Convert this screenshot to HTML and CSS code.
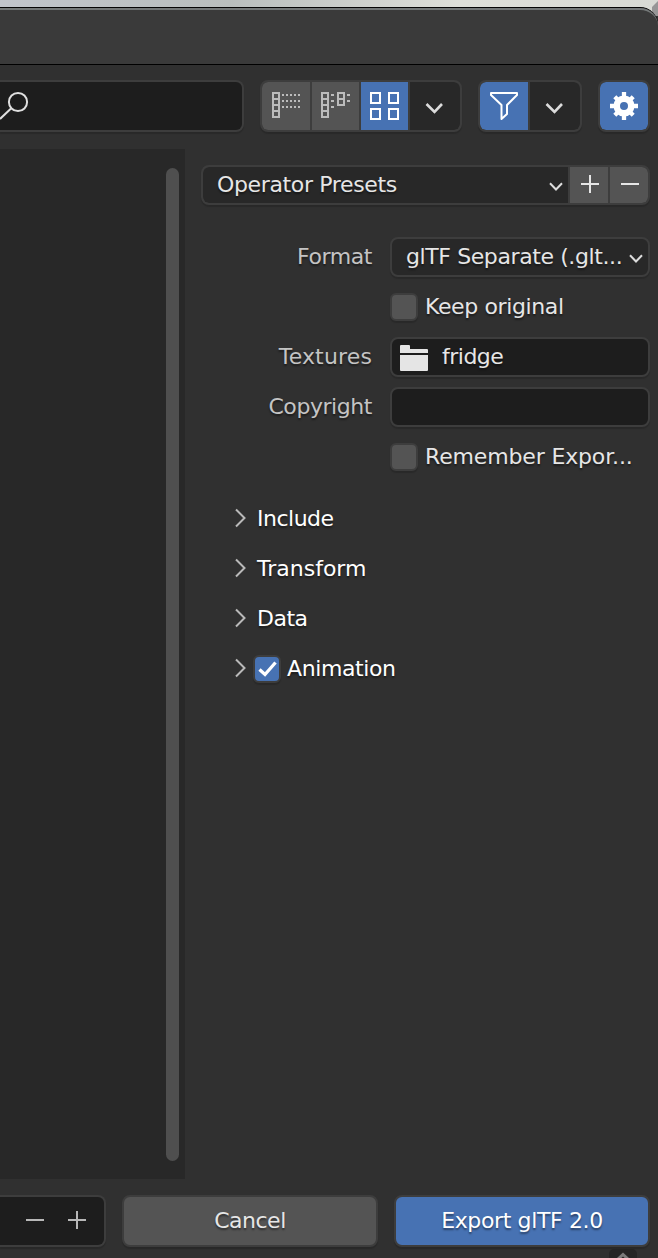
FILE: index.html
```
<!DOCTYPE html>
<html lang="en">
<head>
<meta charset="utf-8">
<title>Export glTF 2.0</title>
<link rel="stylesheet" href="styles.css">
</head>
<body>
<div class="desktop"><span class="corner"></span></div>
<div class="window">
  <header class="titlebar"></header>
  <div class="toolbar">
    <div class="box search">
      <svg width="30" height="48" viewBox="0 0 30 48"><path d="M0 37L11 26.5" stroke="#e0e0e0" stroke-width="2" fill="none"/><circle cx="18" cy="20" r="9.1" fill="none" stroke="#e0e0e0" stroke-width="2"/></svg>
    </div>
    <div class="box group view">
      <div class="cell raised"><svg width="48" height="48" viewBox="0 0 48 48" fill="none" stroke="#bcbcbc" stroke-width="2"><path d="M11 11h6v24h-6zM11 17h6M11 23h6M11 29h6"/><path d="M20 13h19M20 19h19M20 25h19" stroke-dasharray="2 2"/></svg></div>
      <div class="cell raised"><svg width="47" height="48" viewBox="0 0 47 48" fill="none" stroke="#bcbcbc" stroke-width="2"><path d="M10 11h6v24h-6zM10 17h6M10 23h6M10 29h6M26 11h6v12h-6zM26 17h6"/><path d="M19 13h3M19 19h3M19 25h3M35 13h3M35 19h3"/></svg></div>
      <div class="cell active"><svg width="47" height="48" viewBox="0 0 47 48" fill="none" stroke="#fff" stroke-width="2"><path d="M10 11h9v10h-9zM28 11h9v10h-9zM10 27h9v10h-9zM28 27h9v10h-9z"/></svg></div>
      <div class="cell menu"><svg width="50" height="48" viewBox="0 0 50 48"><path d="M16.5 22L24.5 30L32 22" fill="none" stroke="#dcdcdc" stroke-width="2.6"/></svg></div>
    </div>
    <div class="box group filter">
      <div class="cell active"><svg width="48" height="48" viewBox="0 0 48 48"><path d="M11 11H37V13L27 23V32L21.500 37V23L11 13Z" fill="none" stroke="#fff" stroke-width="2" stroke-linejoin="round"/></svg></div>
      <div class="cell menu"><svg width="50" height="48" viewBox="0 0 50 48"><path d="M16.500 22L24.500 30L32 22" fill="none" stroke="#dcdcdc" stroke-width="2.6"/></svg></div>
    </div>
    <div class="box group gear">
      <div class="cell active"><svg width="48" height="48" viewBox="0 0 48 48"><circle cx="24" cy="24" r="7.250" fill="none" stroke="#fff" stroke-width="6.500"/><path d="M24 10v5M24 33v5M10 24h5M33 24h5M14.800 14.800l3.200 3.200M30 30l3.200 3.200M14.800 33.200l3.200-3.200M30 18l3.200-3.200" stroke="#fff" stroke-width="4.300"/></svg></div>
    </div>
  </div>
  <main class="content">
    <section class="files"><div class="scrollbar"></div></section>
    <aside class="options">
      <div class="box group presets">
        <div class="cell menu presets-name"><span class="t-presets">Operator Presets</span>
          <svg width="14" height="10" viewBox="0 0 14 10"><path d="M1 1.200L7 7.500L13 1.200" fill="none" stroke="#dcdcdc" stroke-width="2"/></svg></div>
        <div class="cell raised"><svg width="38" height="36" viewBox="0 0 38 36"><path d="M11 17h18M20 8v18" stroke="#e6e6e6" stroke-width="2"/></svg></div>
        <div class="cell raised"><svg width="38" height="36" viewBox="0 0 38 36"><path d="M11 17h18" stroke="#e6e6e6" stroke-width="2"/></svg></div>
      </div>
      <div class="form">
        <label class="label t-format">Format</label>
        <div class="box field dropdown"><span class="t-separate">glTF Separate (.glt...</span>
          <svg width="14" height="10" viewBox="0 0 14 10"><path d="M1 1.200L7 7.500L13 1.200" fill="none" stroke="#dcdcdc" stroke-width="2"/></svg></div>
        <div class="check"><span class="box tick"></span><span class="t-keep">Keep original</span></div>
        <label class="label t-textures">Textures</label>
        <div class="box field input">
          <svg width="28" height="26" viewBox="0 0 28 26" fill="#e5e5e5"><path d="M0 1q0-1 1-1h8q1 0 1 1v3h17q1 0 1 1v3H0zM0 10h28v15q0 1-1 1H1q-1 0-1-1z"/></svg><span class="t-fridge">fridge</span></div>
        <label class="label t-copyright">Copyright</label>
        <div class="box field input"></div>
        <div class="check"><span class="box tick"></span><span class="t-remember">Remember Expor...</span></div>
      </div>
      <div class="panels">
        <div class="panel"><svg class="arrow" width="12" height="20" viewBox="0 0 12 20"><path d="M1 1.500L9.500 10L1 18.500"/></svg><span class="t-include">Include</span></div>
        <div class="panel"><svg class="arrow" width="12" height="20" viewBox="0 0 12 20"><path d="M1 1.500L9.500 10L1 18.500"/></svg><span class="t-transform">Transform</span></div>
        <div class="panel"><svg class="arrow" width="12" height="20" viewBox="0 0 12 20"><path d="M1 1.500L9.500 10L1 18.500"/></svg><span class="t-data">Data</span></div>
        <div class="panel"><svg class="arrow" width="12" height="20" viewBox="0 0 12 20"><path d="M1 1.500L9.500 10L1 18.500"/></svg><span class="box tick on"><svg width="24" height="24" viewBox="0 0 24 24"><path d="M4.500 12.500L10 17.500L20.500 5.500" fill="none" stroke="#fff" stroke-width="3.300"/></svg></span><span class="t-animation">Animation</span></div>
      </div>
    </aside>
  </main>
  <footer class="footer">
    <div class="box number"><svg width="104" height="48" viewBox="0 0 104 48"><path d="M26 23h18M68 23h18M77 14v18" stroke="#b8b8b8" stroke-width="2"/></svg></div>
    <div class="box button"><span class="t-cancel">Cancel</span></div>
    <div class="box button primary"><span class="t-export">Export glTF 2.0</span></div>
  </footer>
  <div class="handle"><svg width="28" height="9" viewBox="0 0 28 9"><path d="M9 10L14 5.500L19 10" fill="none" stroke="#7b7b7b" stroke-width="3"/></svg></div>
</div>
</body>
</html>
```
FILE: styles.css
```
* { box-sizing: border-box; }
body {
  margin: 0;
  width: 658px;
  height: 1258px;
  overflow: hidden;
  background: #303030;
  color: #e6e6e6;
  font: 22px/26px "DejaVu Sans", sans-serif;
  white-space: nowrap;
  text-shadow: 0 2px 2px rgba(0, 0, 0, .45);
}
svg { display: block; flex: none; }
.desktop {
  height: 16px;
  margin-bottom: -9px;
  background: linear-gradient(90deg, #c1c5cb, #b9bebd 35%, #dedfd9 70%, #d8dad4);
}
.corner {
  display: block;
  width: 6px;
  height: 16px;
  margin-left: auto;
  background: #969696;
  clip-path: polygon(0 7px, 6px 1px, 6px 16px, 0 16px);
}
.window {
  position: relative;
  height: 1251px;
  background: #303030;
  border-top: 1px solid #050505;
  border-radius: 0 18px 0 0;
}
.titlebar {
  height: 57px;
  background: #3a3a3a;
  border-top: 2px solid #747878;
  border-bottom: 1px solid #000;
  border-radius: 0 18px 0 0;
}
.box {
  border: 2px solid #3d3d3d;
  border-radius: 8px;
  box-shadow: 0 2px 1px rgba(0, 0, 0, .15);
}
.toolbar {
  display: flex;
  height: 84px;
  padding-top: 15px;
}
.toolbar .box { height: 52px; }
.search {
  width: 244px;
  background: #1d1d1d;
  border-left: 0;
  border-radius: 0 8px 8px 0;
}
.group {
  display: flex;
  gap: 2px;
  overflow: hidden;
  background: #3d3d3d;
}
.view, .filter, .gear { margin-left: 16px; }
.raised { background: #545454; }
.active { background: #4772b3; }
.menu { background: #282828; }
.cell:first-child { border-radius: 6px 0 0 6px; }
.cell:last-child { border-radius: 0 6px 6px 0; }
.cell:only-child { border-radius: 6px; }
.content { display: flex; height: 1030px; }
.files {
  width: 185px;
  padding: 19px 6px 18px 166px;
  background: #282828;
}
.scrollbar {
  height: 993px;
  border-radius: 7px;
  background: #4f4f4f;
}
.options { width: 473px; padding: 16px 8px 0 16px; }
.presets { height: 40px; }
.presets-name {
  display: flex;
  width: 365px;
  padding: 5px 5px 0 14px;
  justify-content: space-between;
}
.presets-name svg, .dropdown svg { margin-top: 10px; }
.form {
  display: grid;
  grid-template-columns: 171px 260px;
  grid-auto-rows: 40px;
  gap: 10px 18px;
  margin-top: 32px;
}
.label { padding-top: 7px; text-align: right; color: #c4c4c4; }
.field { display: flex; }
.dropdown {
  padding: 5px 5px 0 14px;
  justify-content: space-between;
  background: #282828;
}
.input { padding: 5px 7px 0 8px; gap: 14px; background: #1d1d1d; }
.input svg { margin-top: 1px; }
.check {
  grid-column: 2;
  display: flex;
  gap: 7px;
  padding-top: 7px;
}
.tick {
  flex: none;
  width: 28px;
  height: 28px;
  margin-top: -1px;
  background: #545454;
  border-radius: 6px;
}
.on { background: #4772b3; margin: -1px 6px 0 -4px; }
.panels { margin-top: 16px; padding-left: 33px; }
.panel {
  display: flex;
  align-items: flex-start;
  height: 50px;
  padding-top: 13px;
  color: #fff;
}
.arrow { margin: 2px 10px 0 1px; fill: none; stroke: #b9b9b9; stroke-width: 2; }
.footer { display: flex; gap: 16px; padding-top: 16px; }
.footer .box { height: 52px; }
.number {
  width: 106px;
  background: #1d1d1d;
  border-left: 0;
  border-radius: 0 8px 8px 0;
}
.button { width: 256px; padding-top: 11px; text-align: center; background: #545454; }
.primary { background: #4772b3; color: #fff; }
.handle {
  position: absolute;
  left: 609px;
  bottom: 0;
  height: 9px;
  border-radius: 5px 5px 0 0;
  background: #252525;
}
.t-presets { letter-spacing: -.35px; }
.t-format { letter-spacing: -.42px; }
.t-separate { letter-spacing: -.4px; }
.t-keep { letter-spacing: -.38px; }
.t-textures { letter-spacing: .15px; }
.t-copyright { letter-spacing: -.44px; }
.t-remember { letter-spacing: -.15px; }
.t-fridge { letter-spacing: -.5px; }
.t-include { letter-spacing: -.5px; }
.t-transform { letter-spacing: 0; }
.t-data { letter-spacing: -.5px; }
.t-animation { letter-spacing: -.4px; }
.t-cancel { letter-spacing: -.5px; }
.t-export { letter-spacing: -.37px; }
```
